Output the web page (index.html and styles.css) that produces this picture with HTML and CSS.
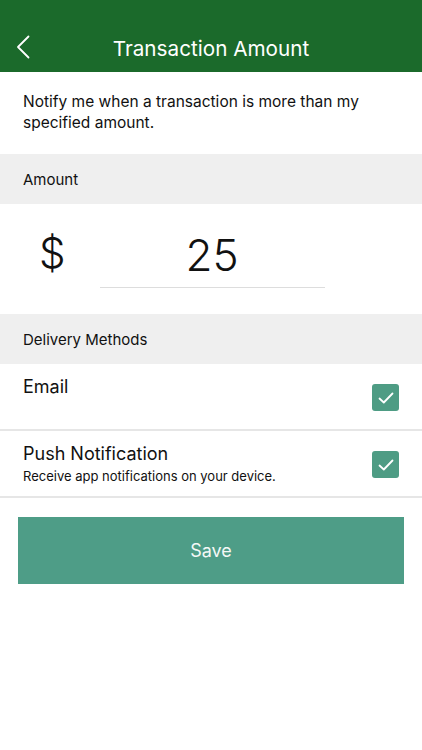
FILE: index.html
```html
<!DOCTYPE html>
<html lang="en">
<head>
    <meta charset="UTF-8">
    <meta name="viewport" content="width=device-width, initial-scale=1.0">
    <title>Transaction Amount</title>
    <link rel="stylesheet" href="styles.css">
</head>
<body>
    <header class="topbar">
        <button class="back" aria-label="Back">
            <svg width="14" height="24" viewBox="0 0 14 24"><path d="M12.5 1.5 L2 12 L12.5 22.5" fill="none" stroke="#ffffff" stroke-width="1.8" stroke-linecap="round" stroke-linejoin="round"/></svg>
        </button>
        <h1>Transaction Amount</h1>
    </header>

    <p class="intro">Notify me when a transaction is more than my specified amount.</p>

    <div class="section-head">Amount</div>
    <div class="amount">
        <span class="currency">$</span>
        <div class="amount-field">25</div>
    </div>

    <div class="section-head">Delivery Methods</div>
    <div class="option">
        <div class="option-text">
            <h3>Email</h3>
        </div>
        <span class="check"><svg width="16" height="12" viewBox="0 0 16 12"><path d="M1.5 6.5 L5.8 10.5 L14.5 1.5" fill="none" stroke="#ffffff" stroke-width="1.8" stroke-linecap="round" stroke-linejoin="round"/></svg></span>
    </div>
    <div class="option">
        <div class="option-text">
            <h3>Push Notification</h3>
            <p>Receive app notifications on your device.</p>
        </div>
        <span class="check"><svg width="16" height="12" viewBox="0 0 16 12"><path d="M1.5 6.5 L5.8 10.5 L14.5 1.5" fill="none" stroke="#ffffff" stroke-width="1.8" stroke-linecap="round" stroke-linejoin="round"/></svg></span>
    </div>

    <button class="save">Save</button>
</body>
</html>
```

FILE: styles.css
```css
body {
    font-family: 'Inter', 'Roboto', sans-serif;
    margin: 0;
    padding: 0;
    background-color: #ffffff;
    color: #111111;
}
.topbar {
    height: 72px;
    background-color: #1b6a2b;
    display: flex;
    align-items: center;
    justify-content: center;
    position: relative;
    padding-top: 24px;
    box-sizing: border-box;
}
.topbar h1 {
    margin: 0;
    color: #ffffff;
    font-size: 20.7px;
    font-weight: 400;
}
.back {
    position: absolute;
    left: 16px;
    top: 35px;
    background: none;
    border: none;
    padding: 0;
    line-height: 0;
}
.intro {
    margin: 0;
    padding: 19px 40px 21px 23px;
    font-size: 15.5px;
    line-height: 21px;
    height: 42px;
}
.section-head {
    background-color: #efefef;
    height: 50px;
    display: flex;
    align-items: center;
    padding-left: 23px;
    font-size: 15px;
}
.amount {
    height: 110px;
    display: flex;
    align-items: flex-start;
}
.currency {
    font-size: 42px;
    font-weight: 300;
    line-height: 50px;
    margin-left: 39px;
    margin-top: 24px;
}
.amount-field {
    width: 225px;
    margin-left: 34px;
    margin-top: 26px;
    text-align: center;
    font-size: 44px;
    font-weight: 300;
    line-height: 50px;
    padding-bottom: 7px;
    border-bottom: 1px solid #dddddd;
}
.option {
    display: flex;
    align-items: flex-start;
    justify-content: space-between;
    border-bottom: 2px solid #e6e6e6;
    padding: 12px 23px 0 23px;
    height: 53px;
}
.option h3 {
    margin: 0;
    font-size: 18px;
    font-weight: 400;
    line-height: 22px;
}
.option p {
    margin: 3px 0 0;
    font-size: 13px;
}
.check {
    width: 27px;
    height: 27px;
    background-color: #4e9c84;
    border-radius: 3px;
    display: flex;
    align-items: center;
    justify-content: center;
    margin-top: 8px;
}
.save {
    display: block;
    width: 386px;
    height: 67px;
    margin: 19px 0 0 18px;
    background-color: #4e9d87;
    color: #f4f8f6;
    border: none;
    font-family: 'Inter', 'Roboto', sans-serif;
    font-size: 18px;
}
```
